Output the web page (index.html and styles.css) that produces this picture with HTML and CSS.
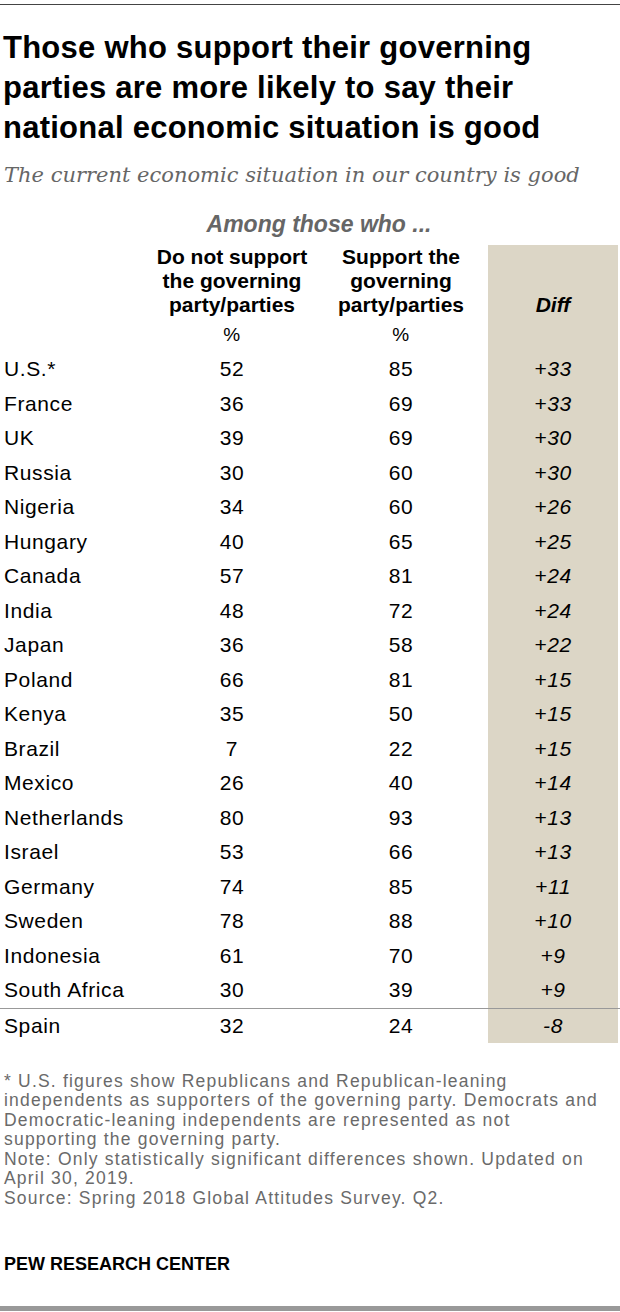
FILE: index.html
```html
<!DOCTYPE html>
<html lang="en">
<head>
<meta charset="utf-8">
<title>Pew chart</title>
<link rel="stylesheet" href="styles.css">
</head>
<body>
<div class="page">
  <div class="topline"></div>
  <h1 class="title">Those who support their governing<br>parties are more likely to say their<br>national economic situation is good</h1>
  <p class="subtitle">The current economic situation in our country is good</p>
  <div class="table">
    <div class="among">Among those who ...</div>
    <div class="row head">
      <div></div>
      <div class="colhead">Do not support<br>the governing<br>party/parties</div>
      <div class="colhead">Support the<br>governing<br>party/parties</div>
      <div class="diff diffhead">Diff</div>
    </div>
    <div class="row pctrow">
      <div></div>
      <div class="num">%</div>
      <div class="num">%</div>
      <div class="diff"></div>
    </div>
    <div class="row"><div class="country">U.S.*</div><div class="num">52</div><div class="num">85</div><div class="diff">+33</div></div>
    <div class="row"><div class="country">France</div><div class="num">36</div><div class="num">69</div><div class="diff">+33</div></div>
    <div class="row"><div class="country">UK</div><div class="num">39</div><div class="num">69</div><div class="diff">+30</div></div>
    <div class="row"><div class="country">Russia</div><div class="num">30</div><div class="num">60</div><div class="diff">+30</div></div>
    <div class="row"><div class="country">Nigeria</div><div class="num">34</div><div class="num">60</div><div class="diff">+26</div></div>
    <div class="row"><div class="country">Hungary</div><div class="num">40</div><div class="num">65</div><div class="diff">+25</div></div>
    <div class="row"><div class="country">Canada</div><div class="num">57</div><div class="num">81</div><div class="diff">+24</div></div>
    <div class="row"><div class="country">India</div><div class="num">48</div><div class="num">72</div><div class="diff">+24</div></div>
    <div class="row"><div class="country">Japan</div><div class="num">36</div><div class="num">58</div><div class="diff">+22</div></div>
    <div class="row"><div class="country">Poland</div><div class="num">66</div><div class="num">81</div><div class="diff">+15</div></div>
    <div class="row"><div class="country">Kenya</div><div class="num">35</div><div class="num">50</div><div class="diff">+15</div></div>
    <div class="row"><div class="country">Brazil</div><div class="num">7</div><div class="num">22</div><div class="diff">+15</div></div>
    <div class="row"><div class="country">Mexico</div><div class="num">26</div><div class="num">40</div><div class="diff">+14</div></div>
    <div class="row"><div class="country">Netherlands</div><div class="num">80</div><div class="num">93</div><div class="diff">+13</div></div>
    <div class="row"><div class="country">Israel</div><div class="num">53</div><div class="num">66</div><div class="diff">+13</div></div>
    <div class="row"><div class="country">Germany</div><div class="num">74</div><div class="num">85</div><div class="diff">+11</div></div>
    <div class="row"><div class="country">Sweden</div><div class="num">78</div><div class="num">88</div><div class="diff">+10</div></div>
    <div class="row"><div class="country">Indonesia</div><div class="num">61</div><div class="num">70</div><div class="diff">+9</div></div>
    <div class="row"><div class="country">South Africa</div><div class="num">30</div><div class="num">39</div><div class="diff">+9</div></div>
    <div class="row last"><div class="country">Spain</div><div class="num">32</div><div class="num">24</div><div class="diff">-8</div></div>
  </div>
  <div class="notes">
    <p>* U.S. figures show Republicans and Republican-leaning<br>independents as supporters of the governing party. Democrats and<br>Democratic-leaning independents are represented as not<br>supporting the governing party.</p>
    <p>Note: Only statistically significant differences shown. Updated on<br>April 30, 2019.</p>
    <p>Source: Spring 2018 Global Attitudes Survey. Q2.</p>
  </div>
  <div class="logo">PEW RESEARCH CENTER</div>
  <div class="bottombar"></div>
</div>
</body>
</html>
```
FILE: styles.css
```css
html, body {
  margin: 0;
  padding: 0;
  background: #ffffff;
  overflow: hidden;
}

.page {
  width: 620px;
  height: 1312px;
  font-family: "Liberation Sans", Arial, sans-serif;
  color: #000;
}

.topline {
  margin-top: 4px;
  height: 1px;
  background: #444;
}

.title {
  margin: 0;
  padding: 23px 0 0 3px;
  font-family: "Liberation Sans", Arial, sans-serif;
  font-weight: bold;
  font-size: 31px;
  line-height: 40px;
  letter-spacing: 0.25px;
  color: #000;
  white-space: nowrap;
}

.subtitle {
  margin: 14px 0 0 0;
  padding-left: 4px;
  font-family: "DejaVu Serif", Georgia, serif;
  font-style: italic;
  font-size: 21px;
  line-height: 26px;
  color: #666;
  white-space: nowrap;
}

.table {
  margin-top: 22px;
}

.among {
  margin-left: 150px;
  width: 338px;
  margin-bottom: 7px;
  text-align: center;
  font-weight: bold;
  font-style: italic;
  font-size: 23px;
  line-height: 28px;
  color: #666;
}

.row {
  display: grid;
  grid-template-columns: 150px 164px 174px 130px;
  height: 34.5px;
  align-items: center;
  font-size: 21px;
  letter-spacing: 0.6px;
}

.row > div {
  height: 100%;
  display: flex;
  align-items: center;
}

.row.head {
  height: 72px;
  letter-spacing: 0;
}

.row.head > div {
  align-items: flex-end;
}

.colhead {
  justify-content: center;
  text-align: center;
  font-weight: bold;
  font-size: 21px;
  line-height: 24px;
}

.row.pctrow {
  height: 35px;
  font-size: 19px;
}

.country {
  padding-left: 4px;
  white-space: nowrap;
}

.num {
  justify-content: center;
}

.diff {
  justify-content: center;
  background: #dcd6c6;
  font-style: italic;
}

.diffhead {
  font-weight: bold;
  font-size: 21px;
  line-height: 24px;
}

.row.last {
  border-top: 1px solid #999;
  height: 35px;
  box-sizing: border-box;
}

.notes {
  margin-top: 29px;
  padding-left: 4px;
  font-size: 17.5px;
  line-height: 19.5px;
  letter-spacing: 1.2px;
  color: #6a6a6a;
  white-space: nowrap;
}

.notes p {
  margin: 0;
}

.logo {
  margin-top: 45px;
  padding-left: 4px;
  font-weight: bold;
  font-size: 18px;
  line-height: 22px;
  color: #000;
}

.bottombar {
  margin-top: 31px;
  height: 5px;
  background: #999;
}
```
